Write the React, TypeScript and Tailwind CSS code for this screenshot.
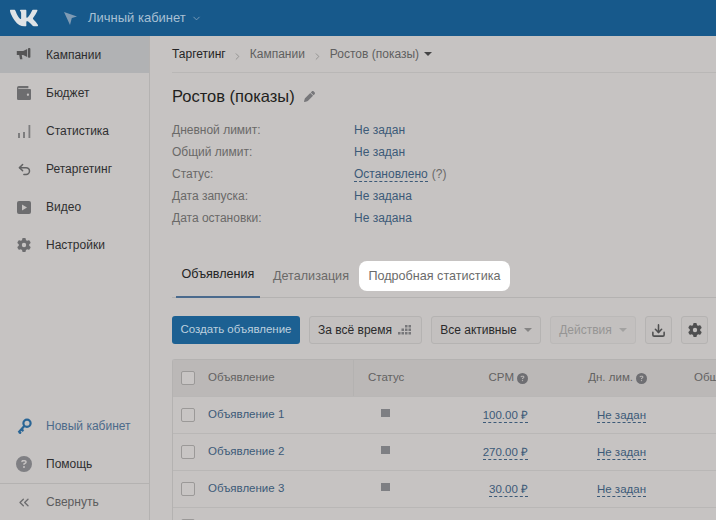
import { FaVk } from "react-icons/fa";
import { FaGear, FaPen, FaCircleQuestion } from "react-icons/fa6";
import { ChevronDown, ChevronRight, ChevronsLeft, Download, Undo2 } from "lucide-react";
import { ReactNode } from "react";

const font = "font-['Liberation_Sans',Arial,sans-serif]";

const Megaphone = () => (
  <svg width="16" height="13" viewBox="0 0 20 16" fill="#555556">
    <path d="M1 3.5h8L14 1v10L9 8.5H7.2L8 14H5L4 8.5H1z" />
    <rect x="15" y="0" width="3" height="12" rx="1" />
  </svg>
);

const Wallet = () => (
  <svg width="14" height="14" viewBox="0 0 16 16" fill="#6d6d6f">
    <path d="M2 0h11v2.5H1.5V3.500H15a1 1 0 0 1 1 1V14.500a1.500 1.500 0 0 1-1.500 1.500h-13A1.500 1.500 0 0 1 0 14.500V2a2 2 0 0 1 2-2z" />
    <circle cx="12.500" cy="10" r="1.300" fill="#c5c2c1" />
  </svg>
);

const Bars = () => (
  <svg width="13" height="14" viewBox="0 0 13 14" fill="#7d7d7e">
    <rect x="0" y="9" width="2" height="5" />
    <rect x="5" y="8" width="2" height="6" />
    <rect x="10.500" y="1" width="1.800" height="13" />
  </svg>
);

const Video = () => (
  <svg width="14" height="13" viewBox="0 0 14 13">
    <rect width="14" height="13" rx="2" fill="#6d6d6f" />
    <path d="M5 3.500l5 3-5 3z" fill="#c5c2c1" />
  </svg>
);

const Pointer = () => (
  <svg width="13" height="13" viewBox="0 0 13 13" fill="#7f9bb4">
    <path d="M0 0l13 4.500-5.200 1.600L6 13z" />
  </svg>
);

const Key = () => (
  <svg width="15" height="16" viewBox="0 0 15 16" fill="none" stroke="#2a6595" strokeWidth="2.2">
    <circle cx="10" cy="5.200" r="3.600" />
    <path d="M7.300 8L1.500 14.500M2 14l2 1.500M4.500 11.500l2 1.500" />
  </svg>
);

const Dots = () => (
  <svg width="15" height="12" viewBox="0 0 15 12" fill="#77777a">
    <rect x="0" y="8" width="2.500" height="2.500" />
    <rect x="3.500" y="8" width="2.500" height="2.500" />
    <rect x="7" y="8" width="2.500" height="2.500" />
    <rect x="10.500" y="8" width="2.500" height="2.500" />
    <rect x="3.500" y="4.500" width="2.500" height="2.500" />
    <rect x="7" y="4.500" width="2.500" height="2.500" />
    <rect x="10.500" y="4.500" width="2.500" height="2.500" />
    <rect x="7" y="1" width="2.500" height="2.500" />
    <rect x="10.500" y="1" width="2.500" height="2.500" />
  </svg>
);

const Caret = ({ color = "border-t-[#6f6e6e]" }: { color?: string }) => (
  <span className={`w-0 h-0 border-x-[4px] border-x-transparent border-t-[4px] ${color}`} />
);

const navItems: { label: string; icon: ReactNode; active?: boolean }[] = [
  { label: "Кампании", icon: <Megaphone />, active: true },
  { label: "Бюджет", icon: <Wallet /> },
  { label: "Статистика", icon: <Bars /> },
  { label: "Ретаргетинг", icon: <Undo2 size={15} color="#626263" strokeWidth={2.4} /> },
  { label: "Видео", icon: <Video /> },
  { label: "Настройки", icon: <FaGear size={14} color="#6d6d6f" /> },
];

const info = [
  ["Дневной лимит:", "Не задан"],
  ["Общий лимит:", "Не задан"],
  ["Статус:", "Остановлено"],
  ["Дата запуска:", "Не задана"],
  ["Дата остановки:", "Не задана"],
];

const rows = [
  ["Объявление 1", "100.00 ₽"],
  ["Объявление 2", "270.00 ₽"],
  ["Объявление 3", "30.00 ₽"],
  ["Объявление 4", "100.00 ₽"],
];

const Checkbox = () => (
  <span className="w-[14px] h-[14px] rounded-[2px] border border-[#9b9998] bg-[#c8c5c4]" />
);

const NavRow = ({ icon, label, className = "" }: { icon: ReactNode; label: string; className?: string }) => (
  <div className={`h-[38px] flex items-center text-[12px] ${className}`}>
    <span className="w-[46px] pl-[16px] flex items-center">
      <span className="w-[16px] flex justify-center">{icon}</span>
    </span>
    {label}
  </div>
);

const App = () => {
  return (
    <div className={`w-[716px] h-[520px] overflow-hidden bg-[#c6c3c2] flex flex-col ${font}`}>
      <header className="h-[36px] shrink-0 bg-[#17598b] flex items-center">
        <span className="w-[64px] pl-[9px] flex items-center">
          <FaVk size={30} color="#dfe3e6" />
        </span>
        <Pointer />
        <span className="ml-[11px] text-[13px] text-[#a8c0d4]">Личный кабинет</span>
        <ChevronDown size={11} color="#7f9fba" className="ml-[5px]" />
      </header>

      <div className="flex flex-1 min-h-0">
        <aside className="w-[150px] shrink-0 border-r border-[#b4b2b1] flex flex-col">
          <div className="flex-1">
            {navItems.map((item) => (
              <NavRow
                key={item.label}
                icon={item.icon}
                label={item.label}
                className={item.active ? "bg-[#b1b2b4] text-[#2d2d2e] !h-[37px] mb-[1px]" : "text-[#2f2f30]"}
              />
            ))}
          </div>
          <NavRow icon={<Key />} label="Новый кабинет" className="text-[#4c6a8a]" />
          <NavRow icon={<FaCircleQuestion size={16} color="#7f7f83" />} label="Помощь" className="text-[#2f2f30]" />
          <div className="h-[37px] border-t border-[#b4b2b1]">
            <NavRow icon={<ChevronsLeft size={17} color="#6d6d6f" />} label="Свернуть" className="text-[#5c5c5d] !h-[36px]" />
          </div>
        </aside>

        <main className="flex-1 min-w-0 pl-[22px] overflow-hidden">
          <nav className="h-[37px] border-b border-[#b9b7b6] flex items-center text-[12px] text-[#5f5f60]">
            <span className="text-[#242425]">Таргетинг</span>
            <ChevronRight size={11} color="#8f8e8d" className="mx-[6.500px] mt-[4px]" />
            <span>Кампании</span>
            <ChevronRight size={11} color="#8f8e8d" className="mx-[7px] mt-[4px]" />
            <span>Ростов (показы)</span>
            <span className="ml-[5px] flex"><Caret color="border-t-[#444445]" /></span>
          </nav>

          <div className="mt-[13px] flex items-center h-[20px]">
            <h1 className="text-[16.500px] text-[#1f1f20]">Ростов (показы)</h1>
            <FaPen size={11} color="#77777a" className="ml-[9px]" />
          </div>

          <div className="mt-[13px] flex flex-col">
            {info.map(([label, value]) => (
              <div key={label} className="h-[22px] flex items-center text-[12px]">
                <span className="w-[182px] text-[#6a6968]">{label}</span>
                {value === "Остановлено" ? (
                  <>
                    <span className="text-[#3c5a78] border-b border-dashed border-[#3c5a78] leading-[14px]">{value}</span>
                    <span className="ml-[4px] text-[#6a6968]">(?)</span>
                  </>
                ) : (
                  <span className="text-[#3c5a78]">{value}</span>
                )}
              </div>
            ))}
          </div>

          <div className="mt-[31px] h-[38px] border-b border-[#b4b2b1] flex items-start text-[12.600px]">
            <span className="ml-[4px] w-[84px] h-[38px] pb-[7px] flex items-center justify-center text-[#232324] border-b-2 border-[#4a6a8d]">
              Объявления
            </span>
            <span className="ml-[13px] h-[30px] mt-[1px] flex items-center text-[#6a6968]">Детализация</span>
            <span className="ml-[10px] h-[30px] mt-[1px] w-[151px] flex items-center justify-center rounded-[8px] bg-white text-[#6b6b6b]">
              Подробная статистика
            </span>
          </div>

          <div className="mt-[18px] flex items-center gap-[9px] text-[12px]">
            <button className="w-[128px] h-[28px] rounded-[3px] bg-[#1c6092] text-[11.500px] text-[#bcd0df]">Создать объявление</button>
            <button className="w-[113px] h-[28px] rounded-[3px] border border-[#b5b3b2] bg-[#c3c0bf] text-[#2a2a2b] flex items-center justify-center gap-[6px]">
              За всё время <Dots />
            </button>
            <button className="w-[110px] h-[28px] rounded-[3px] border border-[#b5b3b2] bg-[#c3c0bf] text-[#2a2a2b] flex items-center justify-center gap-[7px]">
              Все активные <Caret color="border-t-[#858484]" />
            </button>
            <button className="w-[86px] h-[28px] rounded-[3px] border border-[#bbb9b8] bg-[#c3c0bf] text-[#969594] flex items-center justify-center gap-[7px]">
              Действия <Caret color="border-t-[#a3a2a1]" />
            </button>
            <button className="w-[27px] h-[28px] rounded-[3px] border border-[#b5b3b2] bg-[#c3c0bf] flex items-center justify-center">
              <Download size={15} color="#4f4f50" strokeWidth={2.5} />
            </button>
            <button className="w-[27px] h-[28px] rounded-[3px] border border-[#b5b3b2] bg-[#c3c0bf] flex items-center justify-center">
              <FaGear size={14} color="#4f4f50" />
            </button>
          </div>

          <div className="mt-[15px] w-[640px] border-l border-t border-[#b4b2b1] rounded-tl-[3px] text-[11.500px]">
            <div className="h-[36px] flex items-center bg-[#bbb8b7] text-[#636262]">
              <span className="w-[26px] pl-[8px] flex"><Checkbox /></span>
              <span className="w-[155px] h-full flex items-center pl-[9px] border-r border-[#b4b2b1]">Объявление</span>
              <span className="w-[64px] pl-[14px]">Статус</span>
              <span className="w-[110px] flex items-center justify-end gap-[3px]">
                CPM <FaCircleQuestion size={11} color="#6e6e72" />
              </span>
              <span className="w-[119px] flex items-center justify-end gap-[3px]">
                Дн. лим. <FaCircleQuestion size={11} color="#6e6e72" />
              </span>
              <span className="ml-[47px]">Общий лимит</span>
            </div>
            {rows.map(([name, cpm]) => (
              <div key={name} className="h-[37px] flex items-center border-t border-[#b9b7b6]">
                <span className="w-[26px] pl-[8px] flex"><Checkbox /></span>
                <span className="w-[155px] pl-[9px] text-[#3c5a78]">{name}</span>
                <span className="w-[64px] pl-[27px] flex"><span className="w-[9px] h-[8px] mb-[4px] bg-[#7e7f83]" /></span>
                <span className="w-[110px] flex justify-end">
                  <span className="text-[#3c5a78] border-b border-dashed border-[#3c5a78] leading-[14px]">{cpm}</span>
                </span>
                <span className="w-[118px] flex justify-end">
                  <span className="text-[#3c5a78] border-b border-dashed border-[#3c5a78] leading-[14px]">Не задан</span>
                </span>
              </div>
            ))}
          </div>
        </main>
      </div>
    </div>
  );
};

export default App;
